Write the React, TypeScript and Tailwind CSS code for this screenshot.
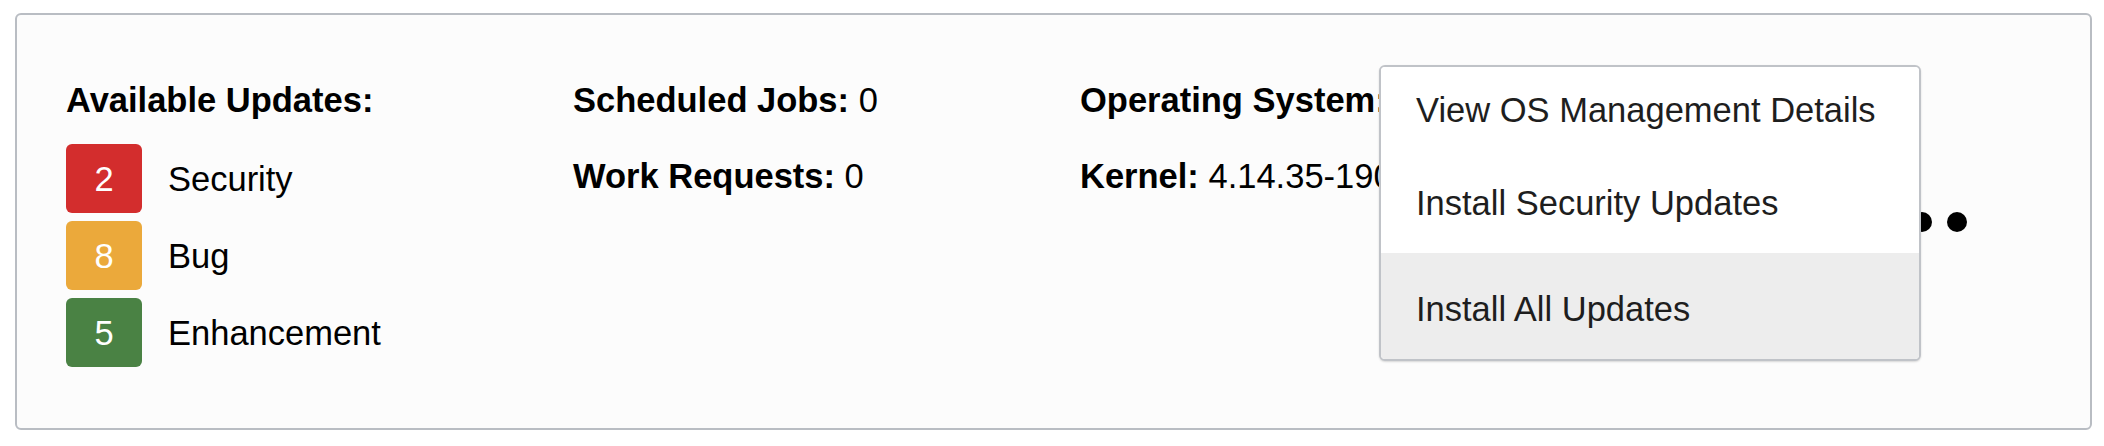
import React from "react";

const updates = [
  { count: 2, label: "Security", color: "bg-[#d32d2d]" },
  { count: 8, label: "Bug", color: "bg-[#eba93b]" },
  { count: 5, label: "Enhancement", color: "bg-[#4a8244]" },
];

const menuItems = [
  { label: "View OS Management Details", height: "h-[80px]", active: false },
  { label: "Install Security Updates", height: "h-[106px]", active: false },
  { label: "Install All Updates", height: "h-[106px]", active: true },
];

const App = () => {
  return (
    <div
      className="relative w-[2104px] h-[446px] bg-white text-black"
      style={{ fontFamily: '"Liberation Sans", Arial, sans-serif' }}
    >
      {/* Summary card */}
      <div className="absolute left-[15px] top-[13px] w-[2077px] h-[417px] rounded-[6px] border-2 border-[#b9bdc3] bg-[#fcfcfc]">
        <div className="flex h-full pl-[49px] pr-[123px] text-[34.5px] leading-[40px]">
          {/* Available updates */}
          <div className="w-[507px] pt-[65px]">
            <div className="font-bold">Available Updates:</div>
            <div className="mt-[24px] flex flex-col gap-[8px]">
              {updates.map((u) => (
                <div key={u.label} className="flex items-center gap-[26px]">
                  <div
                    className={`${u.color} w-[76px] h-[69px] rounded-[6px] flex items-center justify-center text-white`}
                  >
                    {u.count}
                  </div>
                  <span>{u.label}</span>
                </div>
              ))}
            </div>
          </div>

          {/* Jobs */}
          <div className="w-[507px] pt-[65px] flex flex-col gap-[36px]">
            <div>
              <span className="font-bold">Scheduled Jobs:</span> 0
            </div>
            <div>
              <span className="font-bold">Work Requests:</span> 0
            </div>
          </div>

          {/* OS */}
          <div className="flex-1 pt-[65px] flex flex-col gap-[36px] whitespace-nowrap">
            <div>
              <span className="font-bold">Operating System:</span> Oracle Linux 7.9
            </div>
            <div>
              <span className="font-bold">Kernel:</span> 4.14.35-1902.300.11.el7uek
            </div>
          </div>

          {/* Actions */}
          <div className="flex items-center">
            <button className="flex items-center gap-[15px]">
              <span className="w-5 h-5 rounded-full bg-black" />
              <span className="w-5 h-5 rounded-full bg-black" />
              <span className="w-5 h-5 rounded-full bg-black" />
            </button>
          </div>
        </div>
      </div>

      {/* Actions menu */}
      <div className="absolute left-[1379px] top-[65px] w-[542px] z-10 rounded-[6px] border-2 border-[#c0c3c8] bg-white overflow-hidden shadow-[0_1px_2px_rgba(0,0,0,0.15)]">
        {menuItems.map((item) => (
          <div
            key={item.label}
            className={`${item.height} ${
              item.active ? "bg-[#ededed]" : "bg-white"
            } flex items-center pl-[35px] pt-[7px] text-[34.5px] text-[#1e1e1e]`}
          >
            {item.label}
          </div>
        ))}
      </div>
    </div>
  );
};

export default App;
